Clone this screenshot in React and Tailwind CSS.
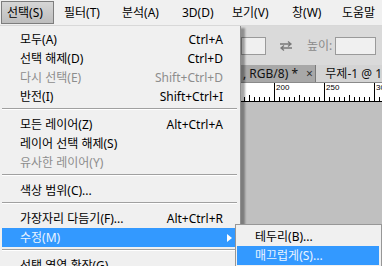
const FONT = { fontFamily: '"Noto Sans", "Noto Sans CJK KR", sans-serif' }

const TOP_MENU = [
  { label: '필터(T)', w: 'w-[58px]' },
  { label: '분석(A)', w: 'w-[60px]' },
  { label: '3D(D)', w: 'w-[50px]' },
  { label: '보기(V)', w: 'w-[60px]' },
  { label: '창(W)', w: 'w-[50px]' },
  { label: '도움말', w: 'w-[40px]' },
]

const ITEMS = [
  { label: '모두(A)', key: 'Ctrl+A' },
  { label: '선택 해제(D)', key: 'Ctrl+D' },
  { label: '다시 선택(E)', key: 'Shift+Ctrl+D', disabled: true },
  { label: '반전(I)', key: 'Shift+Ctrl+I' },
  { sep: true },
  { label: '모든 레이어(Z)', key: 'Alt+Ctrl+A' },
  { label: '레이어 선택 해제(S)' },
  { label: '유사한 레이어(Y)', disabled: true },
  { sep: true },
  { label: '색상 범위(C)...' },
  { sep: true },
  { label: '가장자리 다듬기(F)...', key: 'Alt+Ctrl+R' },
  { label: '수정(M)', sub: true, active: true },
  { sep: true },
  { label: '선택 영역 확장(G)' },
]

function Separator() {
  return (
    <div className="h-[9px] pt-[2px]">
      <div className="h-px bg-[#a0a0a0]" />
      <div className="h-px bg-white" />
    </div>
  )
}

function MenuRow({ label, shortcut, disabled, active, sub }) {
  const color = active ? 'text-[#eaf4ff]' : disabled ? 'text-[#8d8d8d]' : 'text-black'
  return (
    <div className={'h-[19px] flex items-center pl-[18px] pr-[14px] ' + (active ? 'bg-[#3399ff] ' : '') + color}>
      <span className="flex-1 whitespace-nowrap">{label}</span>
      {shortcut && <span className="whitespace-nowrap">{shortcut}</span>}
      {sub && (
        <svg width="5" height="8" viewBox="0 0 5 8" className="mr-[-9px]">
          <path d="M0 0 L5 4 L0 8 Z" fill="#ffffff" />
        </svg>
      )}
    </div>
  )
}

function Ruler() {
  const ticks = []
  for (let x = 4; x < 382; x += 5) {
    const rel = (x - 274 + 500) % 50
    const h = rel === 0 ? 19 : rel === 25 ? 6 : 4
    ticks.push(<line key={x} x1={x + 0.5} x2={x + 0.5} y1={18 - h} y2={18} stroke="#000" strokeWidth="1" />)
  }
  return (
    <svg width="382" height="19" className="block">
      <rect width="382" height="19" fill="#ffffff" />
      {ticks}
      <line x1="0" x2="382" y1="18.5" y2="18.5" stroke="#000" />
      {[['200', 276], ['250', 326], ['300', 376]].map(([t, x]) => (
        <text key={t} x={x} y="7" fontSize="8" fontFamily="Liberation Sans, sans-serif" fill="#000">{t}</text>
      ))}
    </svg>
  )
}

export default function App() {
  return (
    <div className="relative w-[382px] h-[266px] overflow-hidden bg-[#c0c0c0] text-[12px] leading-none" style={FONT}>
      {/* top menu bar */}
      <div className="h-[26px] flex items-center bg-[#f0f0f0] border-b border-[#d8d8d8] whitespace-nowrap text-black">
        <div className="h-[23px] ml-px w-[54px] px-[5px] flex items-center border border-[#7d7d7d] bg-gradient-to-b from-[#d6d6d6] to-[#bdbdbd]">
          선택(S)
        </div>
        <div className="w-[10px]" />
        {TOP_MENU.map((m) => (
          <div key={m.label} className={'shrink-0 ' + m.w}>{m.label}</div>
        ))}
      </div>

      {/* options bar */}
      <div className="h-[39px] bg-[#dadada] flex items-center pl-[241px]">
        <div className="w-[25px] h-[18px] border border-[#9a9a9a] bg-[#f0f0f0]" />
        <svg width="14" height="10" viewBox="0 0 14 10" className="ml-[13px]">
          <path d="M1 3 H12 M9 0.5 L12 3 L9 5.5" stroke="#7a7a7a" strokeWidth="1.3" fill="none" />
          <path d="M13 7 H2 M5 4.5 L2 7 L5 9.5" stroke="#7a7a7a" strokeWidth="1.3" fill="none" />
        </svg>
        <span className="ml-[14px] text-[#8a8a8a]">높이:</span>
        <div className="ml-[3px] w-[41px] h-[18px] border border-[#9a9a9a] bg-[#f0f0f0]" />
      </div>

      {/* document tabs */}
      <div className="h-[18px] flex bg-[#bfbfbf] border-b border-[#8a8a8a]">
        <div className="w-[318px] bg-[#a8a8a8] flex items-center pl-[243px] text-[#111] border-r border-[#7a7a7a]">
          <span>, RGB/8) *</span>
          <span className="ml-[8px] text-[#333]">×</span>
        </div>
        <div className="flex-1 bg-[#d4d4d4] flex items-center pl-[9px] text-[#111] whitespace-nowrap">무제-1 @ 1</div>
      </div>

      <Ruler />

      {/* selection menu */}
      <div className="absolute left-0 top-[26px] w-[241px] bg-[#f0f0f0] border-r border-[#8f8f8f] pt-[4px] pl-[2px] pr-[3px] shadow-[4px_2px_2px_rgba(0,0,0,0.35)]">
        {ITEMS.map((it, i) =>
          it.sep ? (
            <Separator key={i} />
          ) : (
            <MenuRow key={i} label={it.label} shortcut={it.key} disabled={it.disabled} active={it.active} sub={it.sub} />
          )
        )}
      </div>

      {/* modify submenu */}
      <div className="absolute left-[235px] top-[224px] w-[147px] bg-[#f0f0f0] border border-[#979797] pt-[2px] pl-px pr-[2px] pb-[4px]">
        <MenuRow label="테두리(B)..." />
        <MenuRow label="매끄럽게(S)..." active />
      </div>
    </div>
  )
}
